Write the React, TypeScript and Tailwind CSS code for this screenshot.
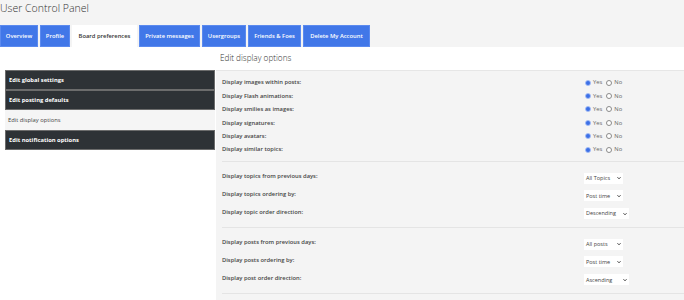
const tabs = [
  { label: 'Overview', w: 'w-[38px]' },
  { label: 'Profile', w: 'w-[30px]' },
  { label: 'Board preferences', w: 'w-[65px]', active: true },
  { label: 'Private messages', w: 'w-[61px]' },
  { label: 'Usergroups', w: 'w-[44px]' },
  { label: 'Friends & Foes', w: 'w-[53px]' },
  { label: 'Delete My Account', w: 'w-[67px]' },
];

const navItems = [
  { label: 'Edit global settings' },
  { label: 'Edit posting defaults' },
  { label: 'Edit display options', active: true },
  { label: 'Edit notification options' },
];

const toggles = [
  'Display images within posts:',
  'Display Flash animations:',
  'Display smilies as images:',
  'Display signatures:',
  'Display avatars:',
  'Display similar topics:',
];

const topicSelects = [
  { label: 'Display topics from previous days:', value: 'All Topics', w: 'w-[39px]' },
  { label: 'Display topics ordering by:', value: 'Post time', w: 'w-[39px]' },
  { label: 'Display topic order direction:', value: 'Descending', w: 'w-[45px]' },
];

const postSelects = [
  { label: 'Display posts from previous days:', value: 'All posts', w: 'w-[39px]' },
  { label: 'Display posts ordering by:', value: 'Post time', w: 'w-[39px]' },
  { label: 'Display post order direction:', value: 'Ascending', w: 'w-[45px]' },
];

function Radio({ checked }: { checked?: boolean }) {
  return (
    <span
      className={`inline-flex h-[6px] w-[6px] items-center justify-center rounded-full border ${
        checked ? 'border-[#9db8f5] bg-[#9db8f5]' : 'border-[#8a8a8a] bg-white'
      }`}
    >
      {checked && <span className="h-[4px] w-[4px] rounded-full bg-[#3b6fe6]" />}
    </span>
  );
}

function Select({ value, w }: { value: string; w: string }) {
  return (
    <span className={`flex h-[11px] ${w} items-center justify-between bg-white pl-[2px] pr-[2px] text-[5.5px] text-[#444]`}>
      <span>{value}</span>
      <svg className="h-[4px] w-[4px]" viewBox="0 0 8 8" fill="none" aria-hidden="true">
        <path d="M1 2.5 4 5.5 7 2.5" stroke="#222" strokeWidth="1.8" />
      </svg>
    </span>
  );
}

function SelectGroup({ rows }: { rows: typeof topicSelects }) {
  return (
    <div className="border-b border-[#e4e4e4] pt-[7px] pr-[8px] pb-[5px]">
      {rows.map((r) => (
        <div key={r.label} className="flex h-[17.7px] items-center justify-between">
          <span className="-mt-[3px] text-[5.8px] font-semibold text-[#444]">{r.label}</span>
          <span className="flex w-[92px]">
            <Select value={r.value} w={r.w} />
          </span>
        </div>
      ))}
    </div>
  );
}

export default function App() {
  return (
    <div
      className="h-[300px] w-[684px] overflow-hidden bg-[#f4f4f4]"
      style={{ fontFamily: '"Open Sans", "Liberation Sans", sans-serif' }}
    >
      <div className="h-[25px] text-[10.5px] font-light leading-[16px] text-[#333]">User Control Panel</div>

      <div className="flex h-[22px] gap-[2px]">
        {tabs.map((t) => (
          <div
            key={t.label}
            className={`flex ${t.w} items-center justify-center text-[5.8px] font-semibold ${
              t.active ? 'bg-white text-[#333]' : 'border border-[#5b8aef] bg-[#4177e8] text-white'
            }`}
          >
            {t.label}
          </div>
        ))}
      </div>

      <div className="flex">
        <div className="w-[216px] bg-white pt-[23px] pl-[5px] pr-[1px]">
          {navItems.map((n) =>
            n.active ? (
              <div key={n.label} className="flex h-[20px] items-center bg-[#f5f5f5] px-[3px] text-[5.8px] text-[#444]">
                {n.label}
              </div>
            ) : (
              <div
                key={n.label}
                className="flex h-[20px] items-center border border-[#6c6c6c] bg-[#2e3236] px-[3px] text-[5.8px] font-bold text-white"
              >
                {n.label}
              </div>
            ),
          )}
          <div className="h-[160px]" />
        </div>

        <div className="flex-1">
          <div className="flex h-[24px] items-center border-b border-[#e6e6e6] bg-white pl-[4px] text-[8.2px] font-light text-[#333]">
            Edit display options
          </div>
          <div className="pl-[6px]">
            <div className="border-b border-[#e4e4e4] pt-[5px] pr-[8px] pb-[5px]">
              {toggles.map((t) => (
                <div key={t} className="flex h-[13.4px] items-center justify-between">
                  <span className="text-[5.8px] font-semibold text-[#444]">{t}</span>
                  <span className="flex w-[91px] items-center text-[5.8px] text-[#666]">
                    <Radio checked />
                    <span className="ml-[2px] mr-[4px]">Yes</span>
                    <Radio />
                    <span className="ml-[2px]">No</span>
                  </span>
                </div>
              ))}
            </div>
            <SelectGroup rows={topicSelects} />
            <SelectGroup rows={postSelects} />
          </div>
        </div>
      </div>
    </div>
  );
}
